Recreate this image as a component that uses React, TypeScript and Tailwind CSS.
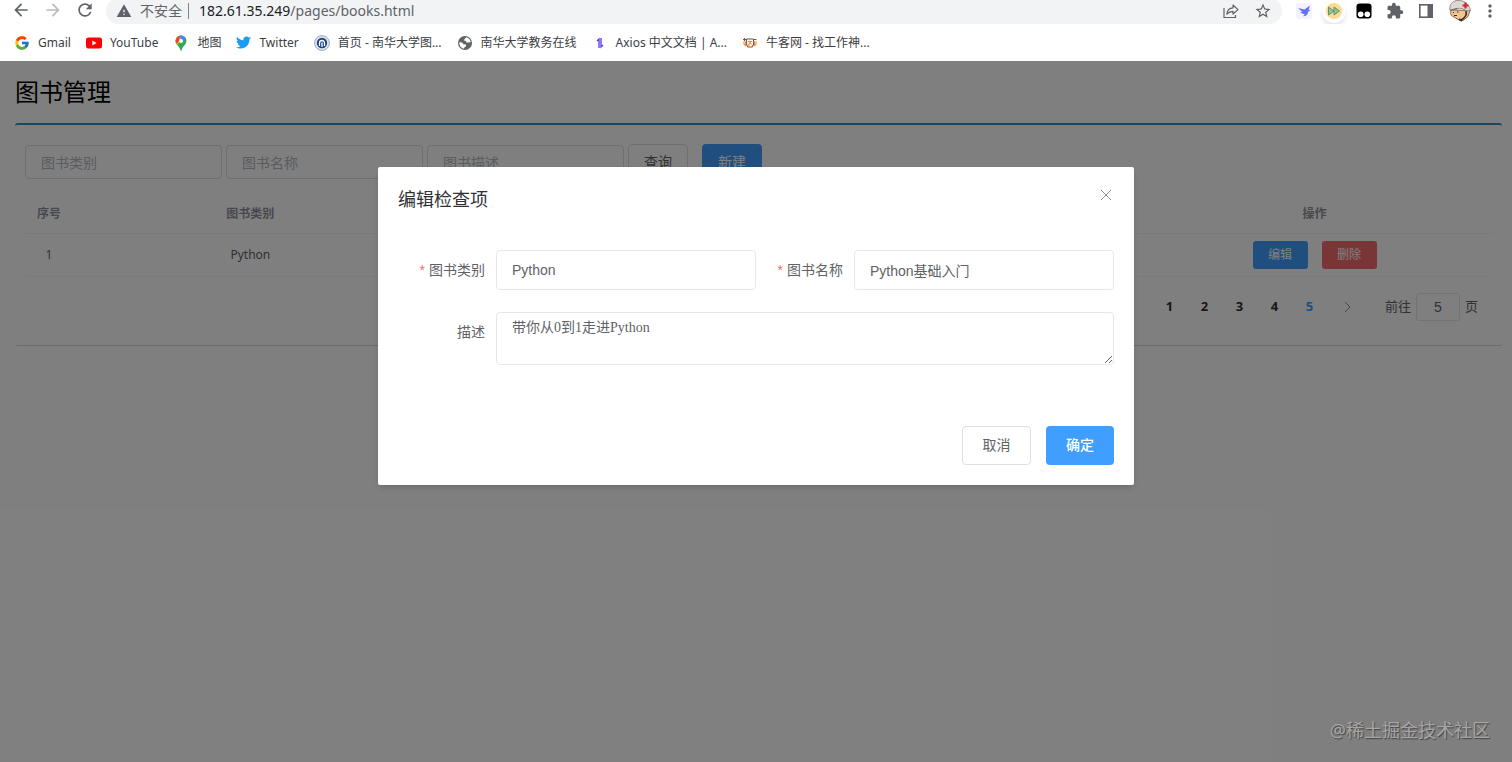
import { ReactNode } from "react";
import clsx from "clsx";
import { FcGoogle } from "react-icons/fc";
import { FaTwitter } from "react-icons/fa";
import {
  MdArrowBack,
  MdArrowForward,
  MdExtension,
  MdMoreVert,
  MdRefresh,
  MdStarBorder,
  MdWarning,
} from "react-icons/md";

type Bookmark = {
  title: string;
  icon: ReactNode;
};

type Book = {
  id: number;
  type: string;
  name: string;
  description: string;
};

const bookmarks: Bookmark[] = [
  { title: "Gmail", icon: <FcGoogle className="size-4" /> },
  { title: "YouTube", icon: <YoutubeIcon /> },
  { title: "地图", icon: <MapsIcon /> },
  { title: "Twitter", icon: <FaTwitter className="size-[15px] text-[#1d9bf0]" /> },
  { title: "首页 - 南华大学图...", icon: <LibraryIcon /> },
  { title: "南华大学教务在线", icon: <GlobeIcon /> },
  { title: "Axios 中文文档 | A...", icon: <AxiosIcon /> },
  { title: "牛客网 - 找工作神...", icon: <NowcoderIcon /> },
];

const books: Book[] = [
  { id: 1, type: "Python", name: "Python基础入门", description: "带你从0到1走进Python" },
];

const pages = [1, 2, 3, 4, 5];

function YoutubeIcon() {
  return (
    <svg viewBox="0 0 16 16" className="size-4">
      <rect y="2.5" width="16" height="11" rx="2.5" fill="#f00" />
      <path d="M6.3 5.6v4.8L10.6 8z" fill="#fff" />
    </svg>
  );
}

function MapsIcon() {
  return (
    <svg viewBox="0 0 16 16" className="size-4">
      <defs>
        <clipPath id="pin">
          <path d="M8 .5a5.4 5.4 0 0 0-5.4 5.4c0 2 .9 3.2 2.1 4.7 1.2 1.5 2.1 2.6 2.5 4.2.2.6.4.9.8.9s.6-.3.8-.9c.4-1.6 1.3-2.7 2.5-4.2 1.2-1.5 2.1-2.7 2.1-4.7A5.4 5.4 0 0 0 8 .5z" />
        </clipPath>
      </defs>
      <g clipPath="url(#pin)">
        <rect width="16" height="16" fill="#34a853" />
        <path d="M2 12 13 0H0v12z" fill="#fbbc04" />
        <path d="M0 0h7L6 6 3 9H0z" fill="#ea4335" />
        <path d="M5.5 0H16v4l-5 2-3-2z" fill="#4285f4" />
        <circle cx="8" cy="5.9" r="2" fill="#fff" />
      </g>
    </svg>
  );
}

function LibraryIcon() {
  return (
    <svg viewBox="0 0 16 16" className="size-4" fill="none">
      <circle cx="8" cy="8" r="7.4" fill="#dfe6ef" stroke="#8296b4" strokeWidth=".8" />
      <circle cx="8" cy="8" r="5.2" fill="#1c4680" />
      <path d="M5.5 11V8a2.500 2.500 0 0 1 5 0v3M8 7.500V12" stroke="#fff" strokeWidth="1.3" />
    </svg>
  );
}

function GlobeIcon() {
  return (
    <svg viewBox="0 0 16 16" className="size-4">
      <circle cx="8" cy="8" r="7" fill="#5f6368" />
      <path
        d="M9.500 2.300 7.500 4l-.5 1.500 2 .5.5 1.500H12l1.700-.6a5.800 5.800 0 0 0-4.200-4.600zM2.300 7.200 5 7.500l1.500 1.700 2.500.3v1.800l-1.500 1-.5 1.500a5.800 5.800 0 0 1-4.700-6.600z"
        fill="#fff"
      />
    </svg>
  );
}

function AxiosIcon() {
  return (
    <svg viewBox="0 0 16 16" className="size-4" fill="none" stroke="#5a32e0">
      <path d="M7 13V4L5 6M9 3v9l2-2" strokeWidth="1.3" />
    </svg>
  );
}

function NowcoderIcon() {
  return (
    <svg viewBox="0 0 16 16" className="size-4" fill="none" strokeWidth="1.1">
      <path d="M1 4.500h3M12 4.500h2.500M2.500 3v3M4.500 4h7M4.500 4v5.500L6 12h4l1.500-2.500V4" stroke="#6b5a50" />
      <path d="M1 7h2.500v2H2l2 2M15 7h-2.500v2H14l-2 2M6 6.500h4M6.500 9.500l1.500-2 1.500 2M7 12V9.500" stroke="#f08a2c" />
    </svg>
  );
}

function ShareIcon() {
  return (
    <svg viewBox="0 0 18 18" className="size-[18px]" fill="none" stroke="#5f6368" strokeWidth="1.2">
      <path d="M2 6v9.500h11.500V13" />
      <path d="M4.800 12c.5-4 2.700-6 6.200-6.200V3l5 4.600-5 4.400V9.300c-2.700 0-4.500.8-6.200 2.700z" strokeLinejoin="round" />
    </svg>
  );
}

function BirdIcon() {
  return (
    <svg viewBox="0 0 16 16" className="size-4">
      <rect width="16" height="16" rx="2" fill="#f3f3ff" />
      <path d="M2 5l6.500 1.500L14 2.500l-1.300 4.200 1.800 1-2.300.8c0 3-2 4.800-5.200 4.800l1.800-2-5-1.600 2.500-.7z" fill="#6672f5" />
    </svg>
  );
}

function ForwardIcon() {
  return (
    <span className="flex size-6 items-center justify-center rounded-full bg-white shadow-md">
      <svg viewBox="0 0 18 18" className="size-[18px]">
        <circle cx="9" cy="9" r="8" fill="#fbdb93" />
        <path d="M3.500 5v8L9 9zM9 5v8l5.500-4z" fill="#9fc08b" stroke="#5f9270" />
      </svg>
    </span>
  );
}

function MonkeyIcon() {
  return (
    <svg viewBox="0 0 16 16" className="size-4">
      <rect x=".5" y=".5" width="15" height="15" rx="3" fill="#000" />
      <circle cx="4.700" cy="11.300" r="2.800" fill="#fff" />
      <circle cx="11.300" cy="11.300" r="2.800" fill="#fff" />
    </svg>
  );
}

function SidePanelIcon() {
  return (
    <svg viewBox="0 0 16 16" className="size-4">
      <rect x="1.800" y="1.800" width="12.400" height="12.400" fill="none" stroke="#5f6368" strokeWidth="1.600" />
      <path d="M9.500 2H14v12H9.500z" fill="#5f6368" />
    </svg>
  );
}

function AvatarIcon() {
  return (
    <svg viewBox="0 0 24 24" className="size-6">
      <path d="M3 11c-1 4 0 6 3 7l5 3 4 .5 5-4 2-6z" fill="#f1c594" stroke="#6b4a31" strokeWidth=".8" />
      <path d="M2 11.500C1 6 4 2 9 1.500c7-.8 12 3.500 13.500 10l-4 .5c-3-2.500-6-3-9-2.500z" fill="#dcd8d3" stroke="#85786e" strokeWidth=".8" />
      <path d="M18 12c1 4-1 7-5 9M11 20l3 2" fill="none" stroke="#382a24" strokeWidth="1.600" />
      <path d="M17.500 3.500v6M14.500 6.500h6" stroke="#d62333" strokeWidth="2.200" />
      <path d="M5 13.500h1M9 13h1.500M6 16.500h3" stroke="#382a24" />
      <path d="M2 11.500 9.500 9.500" stroke="#85786e" strokeWidth="1.500" />
    </svg>
  );
}

function BrowserBar() {
  return (
    <header className="bg-white font-['Noto_Sans','Noto_Sans_CJK_SC',sans-serif] text-[#5f6368]">
      <div className="flex h-6 items-center overflow-hidden pr-3">
        <div className="flex w-[106px] shrink-0 items-center gap-3 pb-1 pl-[11px]">
          <button aria-label="Back"><MdArrowBack className="size-5" /></button>
          <button aria-label="Forward"><MdArrowForward className="size-5 text-[#babcbe]" /></button>
          <button aria-label="Reload"><MdRefresh className="size-5" /></button>
        </div>
        <div className="-mt-0.5 flex h-[26px] flex-1 items-center rounded-full bg-[#f1f3f4] pr-2.5 pl-2.5">
          <MdWarning className="mr-2 size-4" />
          <span className="text-sm">不安全</span>
          <span className="mr-2.5 ml-1.5 h-4 w-px bg-[#80868b]" />
          <span className="flex-1 text-sm">
            <span className="text-[#202124]">182.61.35.249</span>/pages/books.html
          </span>
          <button aria-label="Share" className="mr-3.5"><ShareIcon /></button>
          <button aria-label="Bookmark"><MdStarBorder className="size-[18px]" /></button>
        </div>
        <div className="flex items-center gap-3.5 pb-0.5 pl-3.5">
          <button aria-label="Bird"><BirdIcon /></button>
          <button aria-label="Speed" className="-mx-1"><ForwardIcon /></button>
          <button aria-label="Scripts"><MonkeyIcon /></button>
          <button aria-label="Extensions"><MdExtension className="size-[18px]" /></button>
          <button aria-label="Side panel"><SidePanelIcon /></button>
          <button aria-label="Profile"><AvatarIcon /></button>
          <button aria-label="Menu" className="-ml-1.5"><MdMoreVert className="size-5" /></button>
        </div>
      </div>
      <nav className="flex h-[37px] items-center gap-[15px] pl-3.5 text-xs text-[#3c4043]">
        {bookmarks.map((bookmark) => (
          <a key={bookmark.title} href="#" className="flex items-center gap-2 whitespace-nowrap">
            {bookmark.icon}
            {bookmark.title}
          </a>
        ))}
      </nav>
    </header>
  );
}

function SearchBar() {
  return (
    <div className="flex items-center px-2.5">
      <div className="flex gap-1">
        {["图书类别", "图书名称", "图书描述"].map((placeholder) => (
          <input
            key={placeholder}
            aria-label={placeholder}
            placeholder={placeholder}
            className="h-[34px] w-[197px] rounded border border-[#dcdfe6] px-[15px] text-sm placeholder:text-[#b4b8c0]"
          />
        ))}
      </div>
      <button className="ml-1 h-9 w-[60px] rounded border border-[#dcdfe6] text-sm">查询</button>
      <button className="ml-3.5 h-9 w-[60px] rounded bg-[#409eff] text-sm text-white">新建</button>
    </div>
  );
}

function BookTable() {
  return (
    <div className="px-2.5 pt-3">
      <table className="w-full table-fixed text-center text-xs">
        <thead>
          <tr className="h-[41px] border-b border-[#f3f5f9] text-[#909399]">
            <th className="w-12 pt-1">序号</th>
            <th className="pt-1">图书类别</th>
            <th className="pt-1">图书名称</th>
            <th className="pt-1">描述</th>
            <th className="pt-1">操作</th>
          </tr>
        </thead>
        <tbody>
          {books.map((book) => (
            <tr key={book.id} className="h-[43px] border-b border-[#f3f5f9]">
              <td>{book.id}</td>
              <td>{book.type}</td>
              <td>{book.name}</td>
              <td>{book.description}</td>
              <td>
                <div className="flex justify-center gap-3.5">
                  <button className="h-7 w-[55px] rounded-[3px] bg-[#409eff] text-white">编辑</button>
                  <button className="h-7 w-[55px] rounded-[3px] bg-[#f56c6c] text-white">删除</button>
                </div>
              </td>
            </tr>
          ))}
        </tbody>
      </table>
    </div>
  );
}

function Pagination() {
  return (
    <div className="flex h-[68px] items-center justify-end pr-6 pb-2 text-[13px]">
      {pages.map((page) => (
        <button
          key={page}
          className={clsx("w-[35px] font-bold", page === 5 ? "text-[#409eff]" : "text-[#303133]")}
        >
          {page}
        </button>
      ))}
      <button aria-label="Next page" className="mr-[18px] flex w-10 justify-center text-[#909399]">
        <svg viewBox="0 0 12 12" className="size-3" fill="none" stroke="currentColor">
          <path d="M4 1l5 5-5 5" />
        </svg>
      </button>
      <label className="flex items-center gap-[5px]">
        前往
        <input
          defaultValue="5"
          className="h-7 w-11 rounded-[3px] border border-[#e4e7ed] text-center font-['Liberation_Sans',sans-serif] text-sm"
        />
        页
      </label>
    </div>
  );
}

function EditDialog() {
  const inputClass =
    "h-10 w-full min-w-0 flex-1 rounded border border-[#e4e7ed] px-[15px] font-['Liberation_Sans','Noto_Sans_CJK_SC',sans-serif] text-sm";
  const labelClass = "w-[98px] shrink-0 pr-[11px] text-right text-sm";
  const requiredMark = (
    <span className="mr-1 font-['Liberation_Sans',sans-serif] text-[#f56c6c]">*</span>
  );

  return (
    <div role="dialog" aria-labelledby="dialog-title" className="w-1/2 rounded-xs bg-white shadow-md">
      <div className="flex items-start justify-between px-5 pt-5">
        <h2 id="dialog-title" className="text-lg leading-6 text-[#303133]">编辑检查项</h2>
        <button aria-label="Close" className="p-0.5 text-[#909399]">
          <svg viewBox="0 0 12 12" className="size-3" fill="none" stroke="currentColor">
            <path d="M1 1l10 10M11 1L1 11" />
          </svg>
        </button>
      </div>
      <form className="px-5 pt-[39px]">
        <div className="grid grid-cols-2">
          <div className="flex items-center">
            <label htmlFor="type" className={labelClass}>
              {requiredMark}图书类别
            </label>
            <input id="type" defaultValue="Python" className={inputClass} />
          </div>
          <div className="flex items-center">
            <label htmlFor="name" className={labelClass}>
              {requiredMark}图书名称
            </label>
            <input id="name" defaultValue="Python基础入门" className={inputClass} />
          </div>
        </div>
        <div className="mt-[22px] flex items-start">
          <label htmlFor="description" className={clsx(labelClass, "leading-10")}>描述</label>
          <textarea
            id="description"
            defaultValue="带你从0到1走进Python"
            className="h-[53px] flex-1 resize-y rounded border border-[#e4e7ed] px-[15px] py-[5px] font-['Liberation_Serif','Noto_Sans_CJK_SC',serif] text-sm"
          />
        </div>
      </form>
      <div className="flex justify-end gap-[15px] px-5 pt-[61px] pb-5">
        <button className="h-[39px] w-[69px] rounded border border-[#dcdfe6] pb-0.5 text-sm">取消</button>
        <button className="h-[39px] w-[68px] rounded bg-[#409eff] pb-0.5 text-sm font-medium text-white">确定</button>
      </div>
    </div>
  );
}

export default function App() {
  return (
    <div className="flex min-h-screen flex-col bg-white">
      <BrowserBar />
      <main className="relative flex-1 px-[15px] pr-2.5 font-['Noto_Sans','Noto_Sans_CJK_SC',sans-serif] text-[#606266]">
        <h1 className="py-[17px] text-2xl leading-7 text-black">图书管理</h1>
        <section className="rounded-[3px] border-t-2 border-b border-t-[#3c8dbc] border-b-[#d2d6de] pt-[19px]">
          <SearchBar />
          <BookTable />
          <Pagination />
        </section>
        <div className="absolute inset-0 flex items-start justify-center bg-black/50 pt-[106px]">
          <EditDialog />
        </div>
        <p className="absolute right-[22px] bottom-5 text-lg leading-6 text-[#a6a6a6] [text-shadow:1px_1px_1px_#444]">
          @稀土掘金技术社区
        </p>
      </main>
    </div>
  );
}
